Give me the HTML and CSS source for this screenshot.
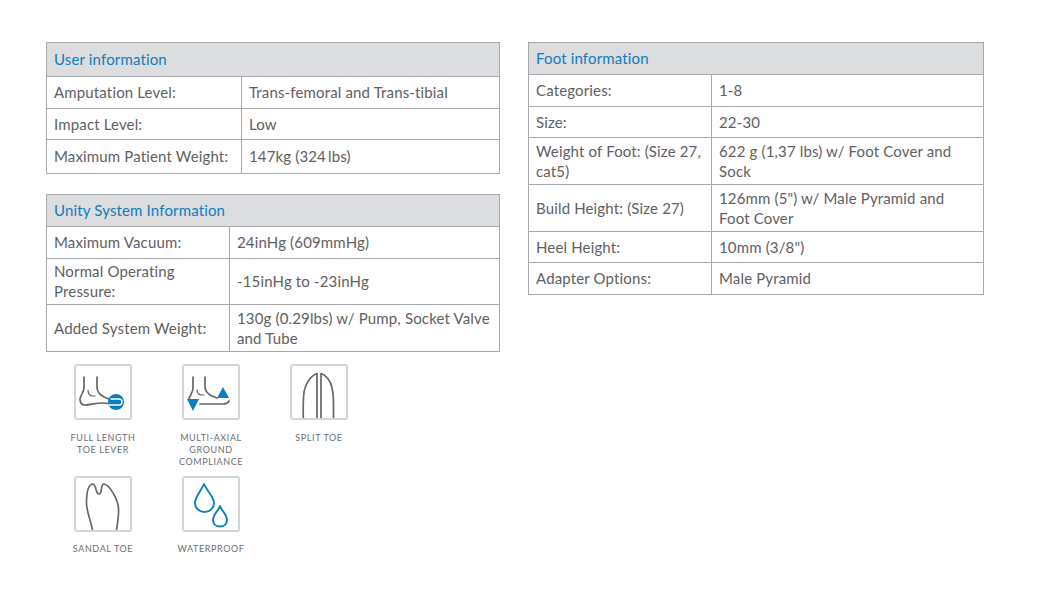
FILE: index.html
```html
<!DOCTYPE html>
<html lang="en">
<head>
<meta charset="utf-8">
<title>Specifications</title>
<link rel="stylesheet" href="styles.css">
</head>
<body>
<main class="page">
  <section class="col col-left">
    <table class="spec spec-user">
      <colgroup><col class="c195"><col></colgroup>
      <thead><tr class="h34"><th colspan="2">User information</th></tr></thead>
      <tbody>
        <tr class="h32"><td>Amputation Level:</td><td>Trans-femoral and Trans-tibial</td></tr>
        <tr class="h31"><td>Impact Level:</td><td>Low</td></tr>
        <tr class="h34"><td>Maximum Patient Weight:</td><td>147kg (324&#8201;lbs)</td></tr>
      </tbody>
    </table>
    <table class="spec spec-unity">
      <colgroup><col class="c183"><col></colgroup>
      <thead><tr class="h32"><th colspan="2">Unity System Information</th></tr></thead>
      <tbody>
        <tr class="h32"><td>Maximum Vacuum:</td><td>24inHg (609mmHg)</td></tr>
        <tr class="h46"><td>Normal Operating Pressure:</td><td>-15inHg to -23inHg</td></tr>
        <tr class="h47"><td>Added System Weight:</td><td>130g (0.29lbs) w/ Pump, Socket Valve and Tube</td></tr>
      </tbody>
    </table>
    <div class="features">
      <figure class="feature">
        <div class="tile">
          <svg viewBox="2 2 54 52" width="54" height="52">
            <path class="g" d="M10 13v11c0 4-4 8-4 11 0 4 2 6 5 6 5 0 10-2 18-2 5 0 9 1 13 1"/>
            <path class="g" d="M23 13v10c0 4 3 8 7 10l5 2"/>
            <path class="g thin" d="M14 26c0 4 2 6 5 6h2"/>
            <circle class="b-fill" cx="42" cy="38" r="8"/>
            <path class="w" d="M37 35h8c2 0 3 1 3 3M35 41h10c2 0 3-1 3-3"/>
          </svg>
        </div>
        <figcaption>FULL LENGTH<br>TOE LEVER</figcaption>
      </figure>
      <figure class="feature">
        <div class="tile">
          <svg viewBox="2 2 54 52" width="54" height="52">
            <path class="g" d="M11 13v11c0 4-3 7-4 11"/>
            <path class="g" d="M23 13v10c0 4 3 7 7 9l5 2"/>
            <path class="g thin" d="M15 26c0 4 2 5 5 5h2"/>
            <path class="g" d="M18 40h23c3 0 5-1 6-3"/>
            <path class="b-fill" d="M41 23l6 11H35z"/>
            <path class="b-fill" d="M5 35h12l-6 12z"/>
          </svg>
        </div>
        <figcaption>MULTI-AXIAL<br>GROUND<br>COMPLIANCE</figcaption>
      </figure>
      <figure class="feature">
        <div class="tile">
          <svg viewBox="2 2 54 52" width="54" height="52">
            <path class="g" d="M13.3 54C13 40 13 29 15 24 17 17 22 11 27 9.5V54"/>
            <path class="g" d="M31 54V9.5C36 11 41 17 42 24 44 30 43.5 40 43.5 54"/>
          </svg>
        </div>
        <figcaption>SPLIT TOE</figcaption>
      </figure>
      <figure class="feature">
        <div class="tile">
          <svg viewBox="2 2 54 52" width="54" height="52">
            <path class="g" d="M18.5 54C17 45 12.5 36 12.500 27 12.500 20 13 9 18.500 8 23 8 21 18 25 18 29 18 26 8 30 8 36 9 44 24 44.500 32 45 40 43.500 47 42.500 54"/>
          </svg>
        </div>
        <figcaption>SANDAL TOE</figcaption>
      </figure>
      <figure class="feature">
        <div class="tile">
          <svg viewBox="2 2 54 52" width="54" height="52">
            <path class="b" d="M22 8C19 15 13 21 13 27 13 32 17 36 22.500 36 28 36 32 32 32 27 32 21 25 15 22 8z"/>
            <path class="b" d="M38 30C36 35 31 39 31 44 31 48 34 50.500 38 50.500 42 50.500 45 48 45 44 45 39 40 35 38 30z"/>
          </svg>
        </div>
        <figcaption>WATERPROOF</figcaption>
      </figure>
    </div>
  </section>
  <section class="col col-right">
    <table class="spec spec-foot">
      <colgroup><col class="c183"><col></colgroup>
      <thead><tr class="h32"><th colspan="2">Foot information</th></tr></thead>
      <tbody>
        <tr class="h32"><td>Categories:</td><td>1-8</td></tr>
        <tr class="h31"><td>Size:</td><td>22-30</td></tr>
        <tr class="h47"><td>Weight of Foot: (Size 27, cat5)</td><td>622 g (1,37 lbs) w/ Foot Cover and Sock</td></tr>
        <tr class="h47"><td>Build Height: (Size 27)</td><td>126mm (5") w/ Male Pyramid and Foot Cover</td></tr>
        <tr class="h31"><td>Heel Height:</td><td>10mm (3/8")</td></tr>
        <tr class="h32"><td>Adapter Options:</td><td>Male Pyramid</td></tr>
      </tbody>
    </table>
  </section>
</main>
</body>
</html>
```
FILE: styles.css
```css
* { box-sizing: border-box; }
html, body { margin: 0; background: #fff; }
body { font-family: Lato, "Open Sans", sans-serif; color: #5f6062; }
.page { display: flex; align-items: flex-start; gap: 28px; padding: 42px 0 0 46px; width: 1062px; height: 589px; overflow: hidden; }
.col-left { width: 454px; }
.col-right { width: 456px; }
.spec { width: 100%; table-layout: fixed; border-collapse: collapse; font-size: 15px; line-height: 20px; letter-spacing: 0.15px; }
.spec th, .spec td { border: 1px solid #a7a9ac; padding: 0 7px 2px 7px; text-align: left; font-weight: 400; vertical-align: middle; }
.spec td:first-child { padding-right: 4px; }
.spec th { background: #dcddde; color: #0e7cc0; }
.spec .h31 td, .spec .h47 td { padding-bottom: 0; }
.spec-unity { margin-top: 20px; }
.c195 { width: 195px; }
.c183 { width: 183px; }
.h31 { height: 31px; }
.h32 { height: 32px; }
.h34 { height: 34px; }
.h46 { height: 46px; }
.h47 { height: 47px; }
.features { display: grid; grid-template-columns: repeat(3, 108px); grid-auto-rows: 112px; margin: 12px 0 0 3px; }
.feature { margin: 0; display: flex; flex-direction: column; align-items: center; }
.tile { width: 58px; height: 56px; border: 2px solid #d4d5d7; border-radius: 3px; overflow: hidden; }
.tile svg { display: block; }
figcaption { margin-top: 12px; font-size: 9px; line-height: 12px; letter-spacing: 0.6px; text-align: center; color: #6d6e71; }
.feature:nth-child(n+4) figcaption { margin-top: 11px; }
.g, .b, .w { fill: none; stroke-linecap: round; stroke-linejoin: round; }
.g { stroke: #66676a; stroke-width: 1.7; }
.thin { stroke-width: 1.2; }
.b { stroke: #0e7cc0; stroke-width: 1.9; }
.w { stroke: #fff; stroke-width: 1.4; }
.b-fill { fill: #0e7cc0; }
```
